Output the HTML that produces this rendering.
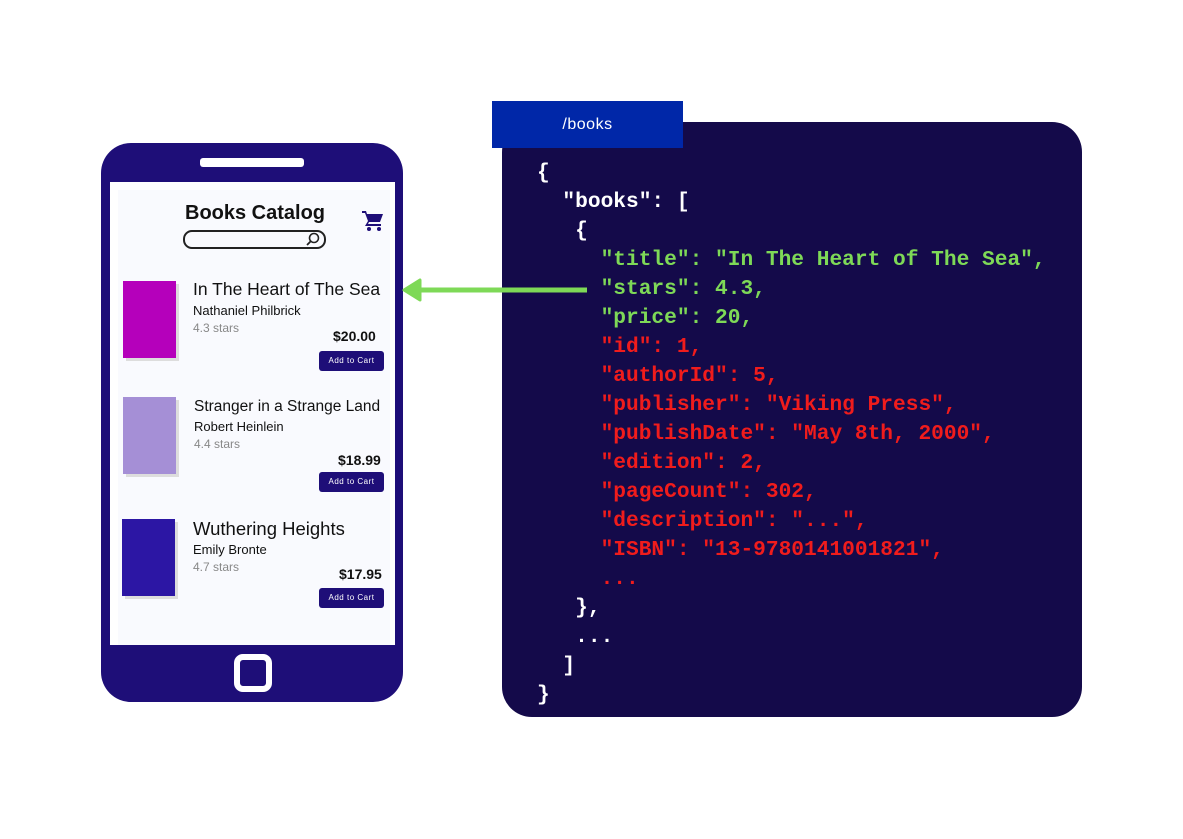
<!DOCTYPE html><html><head><style>
body{margin:0;width:1183px;height:839px;background:#fff;position:relative;overflow:hidden;font-family:"Liberation Sans",sans-serif}
.a{position:absolute}
.code{font-family:"Liberation Mono",monospace;font-weight:bold;font-size:21.2px;color:#fff;white-space:pre;line-height:29px}
.g{color:#7ed957}.r{color:#f01c1c}
.t{font-size:17.5px;color:#111;white-space:nowrap}
.au{font-size:13px;color:#111;white-space:nowrap}
.st{font-size:12px;color:#888;white-space:nowrap}
.pr{font-size:14px;font-weight:bold;color:#111}
.btn{background:#1e0e78;color:#fff;font-size:8px;border-radius:3px;width:65px;height:20px;line-height:20px;text-align:center;letter-spacing:.5px}
.bk{width:53px;height:77px;box-shadow:3px 3px 0 #ddd}
</style></head><body>
<div class="a" style="left:101px;top:143px;width:302px;height:559px;background:#1e0e78;border-radius:30px"></div>
<div class="a" style="left:200px;top:158px;width:104px;height:9px;background:#fff;border-radius:3px"></div>
<div class="a" style="left:110px;top:182px;width:285px;height:463px;background:#fff"></div>
<div class="a" style="left:118px;top:190px;width:272px;height:455px;background:#f9fafe"></div>
<div class="a" style="left:234px;top:654px;width:26px;height:26px;border:6px solid #fff;border-radius:9px"></div>
<div class="a" style="left:185px;top:202px;font-size:20px;font-weight:bold;color:#111">Books Catalog</div>
<div class="a" style="left:183px;top:230px;width:139px;height:15px;border:2px solid #222;border-radius:9px"></div>
<svg class="a" style="left:305px;top:231px" width="16" height="16" viewBox="0 0 16 16"><circle cx="9" cy="7" r="4.5" fill="none" stroke="#222" stroke-width="1.6"/><path d="M6 10L2 14" stroke="#222" stroke-width="1.8"/></svg>
<svg class="a" style="left:361px;top:209px" width="24" height="24" viewBox="0 0 24 24"><path d="M1 2h4l1 3h16l-3 8H8l-1 2h13v2H4l3-5L4 4H1z" fill="#1e0e78"/><circle cx="8" cy="20" r="2" fill="#1e0e78"/><circle cx="18" cy="20" r="2" fill="#1e0e78"/></svg>

<div class="a bk" style="left:123px;top:281px;background:#b500bb"></div>
<div class="a t" style="left:193px;top:279px">In The Heart of The Sea</div>
<div class="a au" style="left:193px;top:303px">Nathaniel Philbrick</div>
<div class="a st" style="left:193px;top:321px">4.3 stars</div>
<div class="a pr" style="left:333px;top:328px">$20.00</div>
<div class="a btn" style="left:319px;top:351px">Add to Cart</div>

<div class="a bk" style="left:123px;top:397px;background:#a58fd6"></div>
<div class="a t" style="left:194px;top:398px;font-size:15.5px">Stranger in a Strange Land</div>
<div class="a au" style="left:194px;top:419px">Robert Heinlein</div>
<div class="a st" style="left:194px;top:437px">4.4 stars</div>
<div class="a pr" style="left:338px;top:452px">$18.99</div>
<div class="a btn" style="left:319px;top:472px">Add to Cart</div>

<div class="a bk" style="left:122px;top:519px;background:#2c16a4"></div>
<div class="a t" style="left:193px;top:518px;font-size:18.5px">Wuthering Heights</div>
<div class="a au" style="left:193px;top:542px">Emily Bronte</div>
<div class="a st" style="left:193px;top:560px">4.7 stars</div>
<div class="a pr" style="left:339px;top:566px">$17.95</div>
<div class="a btn" style="left:319px;top:588px">Add to Cart</div>

<div class="a" style="left:502px;top:122px;width:580px;height:595px;background:#140a4a;border-radius:30px"></div>
<div class="a" style="left:492px;top:101px;width:191px;height:47px;background:#0027a8;color:#fff;font-size:16px;line-height:47px;text-align:center;letter-spacing:.5px">/books</div>
<svg class="a" style="left:400px;top:277px" width="190" height="26"><path d="M187 13H20" stroke="#7ed957" stroke-width="5"/><path d="M4 13L20 3V23Z" fill="#7ed957" stroke="#7ed957" stroke-width="3" stroke-linejoin="round"/></svg>
<div class="a code" style="left:537px;top:159px">{
  "books": [
   {
     <span class="g">"title": "In The Heart of The Sea",</span>
     <span class="g">"stars": 4.3,</span>
     <span class="g">"price": 20,</span>
     <span class="r">"id": 1,</span>
     <span class="r">"authorId": 5,</span>
     <span class="r">"publisher": "Viking Press",</span>
     <span class="r">"publishDate": "May 8th, 2000",</span>
     <span class="r">"edition": 2,</span>
     <span class="r">"pageCount": 302,</span>
     <span class="r">"description": "...",</span>
     <span class="r">"ISBN": "13-9780141001821",</span>
     <span class="r">...</span>
   },
   ...
  ]
}</div>
</body></html>
